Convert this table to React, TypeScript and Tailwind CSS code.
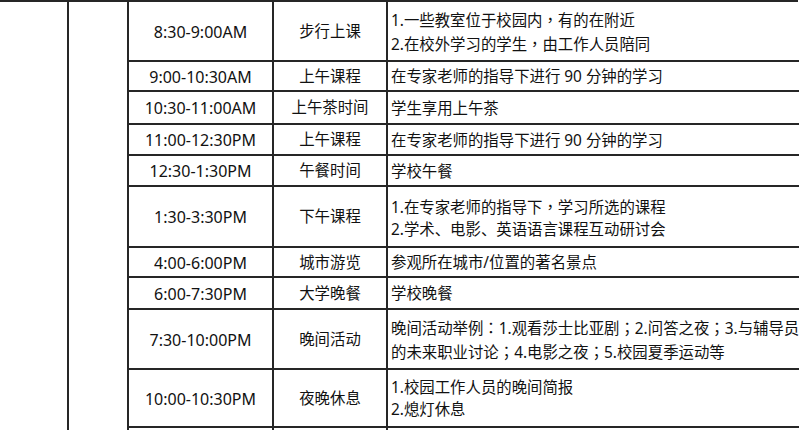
import React from "react";

type Row = { h: string; time: string; act: string; desc: string[] };

const rows: Row[] = [
  { h: "h-[58px]", time: "8:30-9:00AM", act: "步行上课", desc: ["1.一些教室位于校园内，有的在附近", "2.在校外学习的学生，由工作人员陪同"] },
  { h: "h-[28px]", time: "9:00-10:30AM", act: "上午课程", desc: ["在专家老师的指导下进行 90 分钟的学习"] },
  { h: "h-[31px]", time: "10:30-11:00AM", act: "上午茶时间", desc: ["学生享用上午茶"] },
  { h: "h-[29px]", time: "11:00-12:30PM", act: "上午课程", desc: ["在专家老师的指导下进行 90 分钟的学习"] },
  { h: "h-[29px]", time: "12:30-1:30PM", act: "午餐时间", desc: ["学校午餐"] },
  { h: "h-[59px]", time: "1:30-3:30PM", act: "下午课程", desc: ["1.在专家老师的指导下，学习所选的课程", "2.学术、电影、英语语言课程互动研讨会"] },
  { h: "h-[28px]", time: "4:00-6:00PM", act: "城市游览", desc: ["参观所在城市/位置的著名景点"] },
  { h: "h-[30px]", time: "6:00-7:30PM", act: "大学晚餐", desc: ["学校晚餐"] },
  { h: "h-[58px]", time: "7:30-10:00PM", act: "晚间活动", desc: ["晚间活动举例：1.观看莎士比亚剧；2.问答之夜；3.与辅导员", "的未来职业讨论；4.电影之夜；5.校园夏季运动等"] },
  { h: "h-[56px]", time: "10:00-10:30PM", act: "夜晚休息", desc: ["1.校园工作人员的晚间简报", "2.熄灯休息"] },
];

function Text({ s }: { s: string }) {
  const parts = s.split(/([，；：])/);
  return (
    <>
      {parts.map((p, i) =>
        /^[，；：]$/.test(p) ? (
          <span key={i} className="inline-block w-[1em] text-center" style={{ fontFamily: '"Noto Sans CJK TC", sans-serif' }}>
            {p}
          </span>
        ) : (
          <React.Fragment key={i}>{p}</React.Fragment>
        )
      )}
    </>
  );
}

export default function App() {
  return (
    <div
      className="w-[800px] h-[430px] overflow-hidden bg-white text-[#111] text-[15.4px] [text-spacing-trim:space-all]"
      style={{ fontFamily: '"Noto Sans", "Noto Sans CJK SC", sans-serif' }}
    >
      <div className="w-[798px] border-t-2 border-[#262626]">
        <div className="flex">
          <div className="w-[69px] shrink-0 border-r-2 border-[#262626]" />
          <div className="w-[60px] shrink-0 border-r-2 border-[#262626]" />
          <div className="flex-1 flex flex-col">
            {rows.map((r, i) => (
              <div key={i} className={`flex border-b-2 border-[#262626] ${r.h} box-content`}>
                <div className="w-[145px] shrink-0 border-r-2 border-[#262626] flex items-center justify-center whitespace-nowrap text-[16px] pt-[1px]">
                  {r.time}
                </div>
                <div className="w-[114px] shrink-0 border-r-2 border-[#262626] flex items-center justify-center whitespace-nowrap pt-[1px]">
                  {r.act}
                </div>
                <div className="flex-1 flex flex-col justify-center pl-[3px] pt-[2px] leading-[22px] whitespace-nowrap">
                  {r.desc.map((d, j) => (
                    <div key={j}>
                      <Text s={d} />
                    </div>
                  ))}
                </div>
              </div>
            ))}
          </div>
        </div>
        <div className="flex h-[4px]">
          <div className="w-[69px] shrink-0 border-r-2 border-[#262626]" />
          <div className="w-[60px] shrink-0 border-r-2 border-[#262626]" />
          <div className="w-[145px] shrink-0 border-r-2 border-[#262626]" />
          <div className="w-[114px] shrink-0 border-r-2 border-[#262626]" />
        </div>
      </div>
    </div>
  );
}
